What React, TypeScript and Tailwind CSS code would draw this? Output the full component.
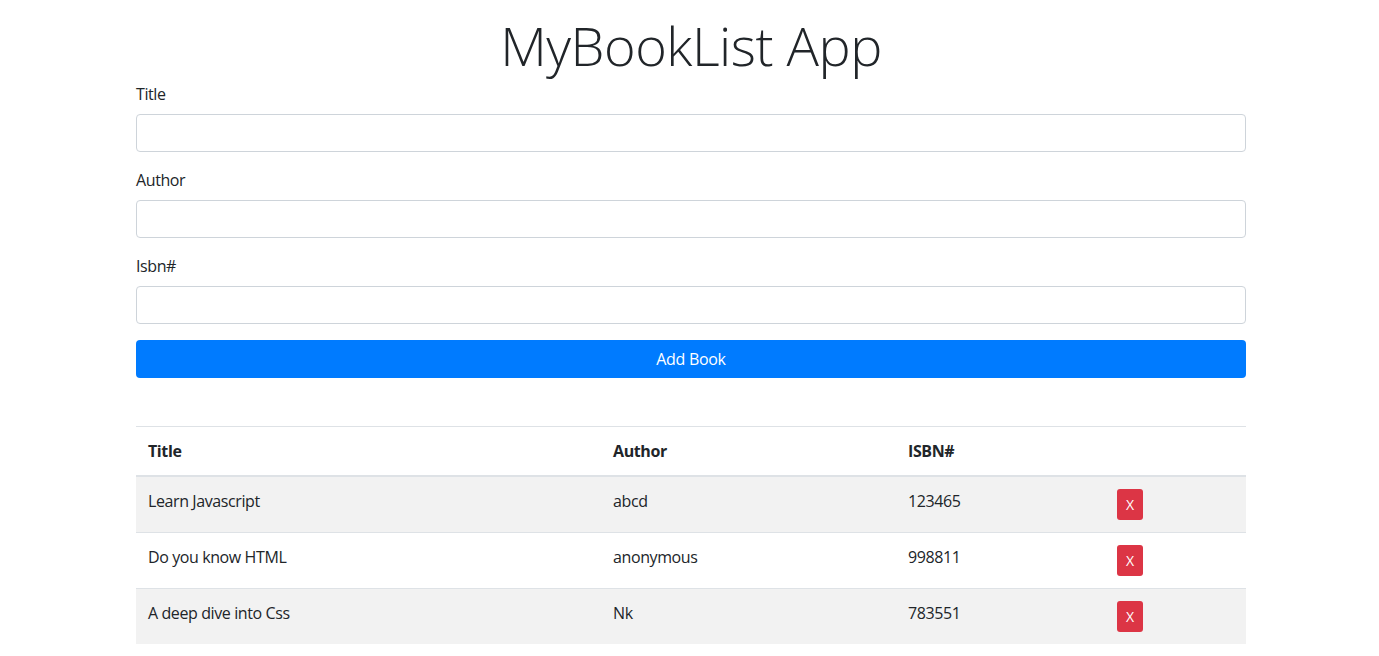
import React from "react";

const books = [
  { title: "Learn Javascript", author: "abcd", isbn: "123465" },
  { title: "Do you know HTML", author: "anonymous", isbn: "998811" },
  { title: "A deep dive into Css", author: "Nk", isbn: "783551" },
];

function Field({ label }: { label: string }) {
  return (
    <div className="mb-4">
      <label className="block mb-2 text-base leading-6 tracking-[-0.4px] text-[#212529]">{label}</label>
      <input
        type="text"
        className="block w-full h-[38px] px-3 border border-[#ced4da] rounded-[4px] bg-white outline-none"
      />
    </div>
  );
}

export default function App() {
  return (
    <div
      className="min-h-[656px] bg-white text-[#212529]"
      style={{ fontFamily: '"Open Sans", "Noto Sans", "Liberation Sans", sans-serif' }}
    >
      <div className="w-[1110px] ml-[136px]">
        <h1 className="pt-[12px] mb-[3px] text-center text-[54px] font-light leading-[67px] tracking-[-0.5px]">
          MyBookList App
        </h1>
        <form>
          <Field label="Title" />
          <Field label="Author" />
          <Field label="Isbn#" />
          <button
            type="button"
            className="block w-full h-[38px] rounded-[4px] bg-[#007bff] text-white text-base leading-6 tracking-[-0.3px]"
          >
            Add Book
          </button>
        </form>
        <table className="w-full mt-12 border-collapse text-base leading-6 tracking-[-0.4px]">
          <thead>
            <tr>
              <th className="w-[465px] text-left font-bold p-3 border-t border-b-2 border-[#dee2e6]">Title</th>
              <th className="w-[295px] text-left font-bold p-3 border-t border-b-2 border-[#dee2e6]">Author</th>
              <th className="w-[209px] text-left font-bold p-3 border-t border-b-2 border-[#dee2e6]">ISBN#</th>
              <th className="text-left p-3 border-t border-b-2 border-[#dee2e6]"></th>
            </tr>
          </thead>
          <tbody>
            {books.map((b, i) => (
              <tr key={b.isbn} className={i % 2 === 0 ? "bg-[#f2f2f2]" : "bg-white"}>
                <td className="p-3 align-top border-t border-[#dee2e6]">{b.title}</td>
                <td className="p-3 align-top border-t border-[#dee2e6]">{b.author}</td>
                <td className="p-3 align-top border-t border-[#dee2e6]">{b.isbn}</td>
                <td className="p-3 align-top border-t border-[#dee2e6]">
                  <button
                    type="button"
                    className="w-[26px] h-[31px] rounded-[3px] bg-[#dc3545] text-white text-sm leading-[21px] tracking-normal"
                  >
                    X
                  </button>
                </td>
              </tr>
            ))}
          </tbody>
        </table>
      </div>
    </div>
  );
}
